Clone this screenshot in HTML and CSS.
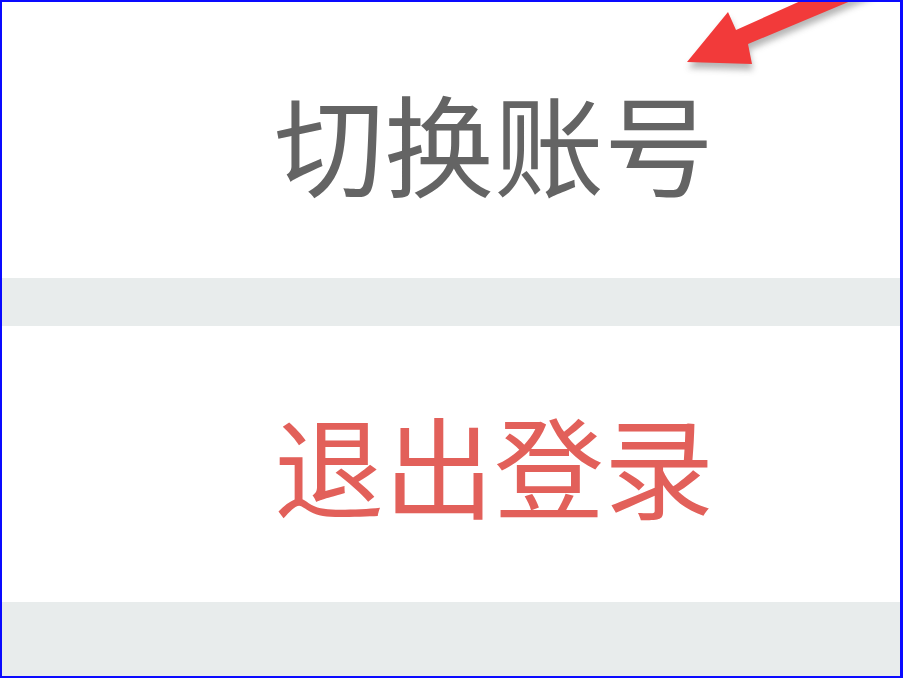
FILE: index.html
```html
<!DOCTYPE html>
<html>
<head>
<meta charset="utf-8">
<link rel="stylesheet" href="styles.css">
</head>
<body>
<div class="frame">
  <div class="row row-top"><span class="label label-switch">切换账号</span></div>
  <div class="gap"></div>
  <div class="row row-bottom"><span class="label label-logout">退出登录</span></div>
  <div class="gap gap-end"></div>
  <svg class="arrow" width="903" height="120" viewBox="0 0 903 120">
    <defs>
      <filter id="sh" x="-20%" y="-20%" width="140%" height="160%">
        <feGaussianBlur stdDeviation="3"/>
      </filter>
    </defs>
    <g fill="#6e6e6e" opacity="0.5" filter="url(#sh)" transform="translate(1,6)">
      <polygon points="687,62 728,12 736,30 825,-10 877,-10 748,44 752,64"/>
    </g>
    <polygon fill="#f23a3a" points="687,62 728,12 736,30 825,-10 877,-10 748,44 752,64"/>
  </svg>
</div>
</body>
</html>
```
FILE: styles.css
```css
html, body {
  margin: 0;
  padding: 0;
  background: #ffffff;
}
.frame {
  position: relative;
  width: 903px;
  height: 678px;
  box-sizing: border-box;
  border: 2px solid #0a0aff;
  border-right-width: 3px;
  overflow: hidden;
  display: flex;
  flex-direction: column;
  background: #ffffff;
}
.row {
  display: flex;
  align-items: center;
  padding-left: 272px;
  background: #ffffff;
}
.row-top {
  height: 276px;
}
.row-bottom {
  height: 276px;
}
.gap {
  height: 48px;
  background: #e8ecec;
}
.gap-end {
  flex: 1;
}
.label {
  font-family: "Noto Sans CJK SC", "Noto Sans", sans-serif;
  font-size: 110px;
  line-height: 1;
  font-weight: 400;
}
.label-switch {
  color: #646464;
  margin-top: 2px;
}
.label-logout {
  color: #e2605a;
  margin-bottom: 2px;
}
.arrow {
  position: absolute;
  left: -2px;
  top: -2px;
}
```
